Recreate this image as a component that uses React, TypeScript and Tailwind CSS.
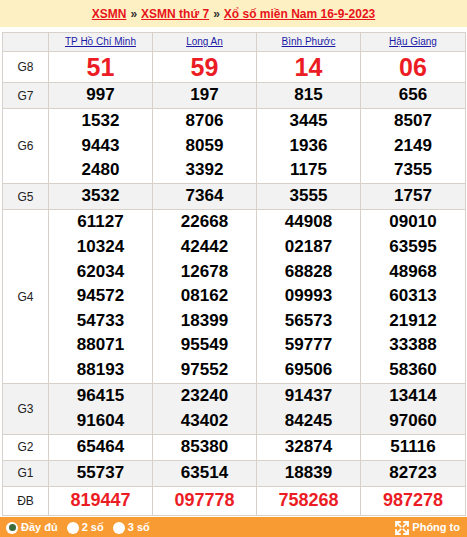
import React from 'react';

type Row = {
  label: string;
  values: string[][];
  shaded?: boolean;
  kind?: 'g8' | 'db';
  h: string;
};

const provinces = ['TP Hồ Chí Minh', 'Long An', 'Bình Phước', 'Hậu Giang'];

const rows: Row[] = [
  { label: 'G8', kind: 'g8', h: 'h-[31px]', values: [['51'], ['59'], ['14'], ['06']] },
  { label: 'G7', shaded: true, h: 'h-[26px]', values: [['997'], ['197'], ['815'], ['656']] },
  {
    label: 'G6',
    h: 'h-[75px]',
    values: [
      ['1532', '9443', '2480'],
      ['8706', '8059', '3392'],
      ['3445', '1936', '1175'],
      ['8507', '2149', '7355'],
    ],
  },
  { label: 'G5', shaded: true, h: 'h-[26px]', values: [['3532'], ['7364'], ['3555'], ['1757']] },
  {
    label: 'G4',
    h: 'h-[174px]',
    values: [
      ['61127', '10324', '62034', '94572', '54733', '88071', '88193'],
      ['22668', '42442', '12678', '08162', '18399', '95549', '97552'],
      ['44908', '02187', '68828', '09993', '56573', '59777', '69506'],
      ['09010', '63595', '48968', '60313', '21912', '33388', '58360'],
    ],
  },
  {
    label: 'G3',
    shaded: true,
    h: 'h-[51px]',
    values: [
      ['96415', '91604'],
      ['23240', '43402'],
      ['91437', '84245'],
      ['13414', '97060'],
    ],
  },
  { label: 'G2', h: 'h-[25px]', values: [['65464'], ['85380'], ['32874'], ['51116']] },
  { label: 'G1', shaded: true, h: 'h-[26px]', values: [['55737'], ['63514'], ['18839'], ['82723']] },
  { label: 'ĐB', kind: 'db', h: 'h-[29px]', values: [['819447'], ['097778'], ['758268'], ['987278']] },
];

const Radio = ({ checked }: { checked?: boolean }) => (
  <span className="inline-flex h-[12px] w-[12px] items-center justify-center rounded-full bg-white">
    {checked && <span className="h-[7px] w-[7px] rounded-full bg-[#3d6b3a]" />}
  </span>
);

// four arrows pointing out to the corners
const ExpandIcon = () => (
  <svg width="14" height="14" viewBox="0 0 16 16" fill="none" stroke="white" strokeLinecap="square">
    <path d="M3 3 L6.2 6.2 M13 3 L9.8 6.2 M3 13 L6.2 9.8 M13 13 L9.8 9.8" strokeWidth="2.2" />
    <path d="M1.2 1.2 h4.3 M1.2 1.2 v4.3" strokeWidth="2.2" />
    <path d="M14.8 1.2 h-4.3 M14.8 1.2 v4.3" strokeWidth="2.2" />
    <path d="M1.2 14.8 h4.3 M1.2 14.8 v-4.3" strokeWidth="2.2" />
    <path d="M14.8 14.8 h-4.3 M14.8 14.8 v-4.3" strokeWidth="2.2" />
  </svg>
);

export default function App() {
  return (
    <div className="h-[537px] w-[467px] bg-white font-['Liberation_Sans',Arial,sans-serif]">
      {/* Banner */}
      <div className="flex h-[27px] items-center justify-center bg-[#fdf1c4] pt-px text-[12px] font-bold">
        <a className="text-[#e8141b] underline">XSMN</a>
        <span className="mx-[4px] text-[#333]">»</span>
        <a className="text-[#e8141b] underline">XSMN thứ 7</a>
        <span className="mx-[4px] text-[#333]">»</span>
        <a className="text-[#e8141b] underline">Xổ số miền Nam 16-9-2023</a>
      </div>

      {/* Results table */}
      <table className="ml-[2px] mt-[5px] w-[464px] table-fixed border-collapse border border-[#d8d1ca]">
        <colgroup>
          <col className="w-[46px]" />
          <col className="w-[104px]" />
          <col className="w-[104px]" />
          <col className="w-[104px]" />
          <col />
        </colgroup>
        <thead>
          <tr className="h-[19px] bg-[#f2f2f2]">
            <th className="border border-[#d8d1ca]" />
            {provinces.map((p) => (
              <th key={p} className="border border-[#d8d1ca] p-0 text-center text-[10px] font-normal leading-[18px]">
                <a className="text-[#1a1aa6] underline">{p}</a>
              </th>
            ))}
          </tr>
        </thead>
        <tbody>
          {rows.map((r) => (
            <tr key={r.label} className={`${r.h} ${r.shaded ? 'bg-[#f2f2f2]' : 'bg-white'}`}>
              <td className="border border-[#d8d1ca] p-0 text-center text-[12px] text-[#222]">{r.label}</td>
              {r.values.map((col, i) => (
                <td key={i} className="border border-[#d8d1ca] p-0 text-center align-middle">
                  {col.map((v) =>
                    r.kind === 'g8' ? (
                      <div key={v} className="text-[25px] font-bold leading-[29px] text-[#ec1c24]">
                        {v}
                      </div>
                    ) : r.kind === 'db' ? (
                      <div key={v} className="text-[18px] font-bold leading-[27px] text-[#ec1c24]">
                        {v}
                      </div>
                    ) : (
                      <div key={v} className="text-[17px] font-bold leading-[24.6px] text-black">
                        {v}
                      </div>
                    )
                  )}
                </td>
              ))}
            </tr>
          ))}
        </tbody>
      </table>

      {/* Footer */}
      <div className="mt-px flex h-[22px] items-center justify-between bg-[#f89b32] px-[6px] text-[11px] font-bold text-white">
        <div className="flex items-center">
          <Radio checked />
          <span className="ml-[3px]">Đầy đủ</span>
          <span className="ml-[9px] flex">
            <Radio />
          </span>
          <span className="ml-[3px]">2 số</span>
          <span className="ml-[9px] flex">
            <Radio />
          </span>
          <span className="ml-[3px]">3 số</span>
        </div>
        <div className="flex items-center pr-px">
          <ExpandIcon />
          <span className="ml-[3px]">Phóng to</span>
        </div>
      </div>
    </div>
  );
}
